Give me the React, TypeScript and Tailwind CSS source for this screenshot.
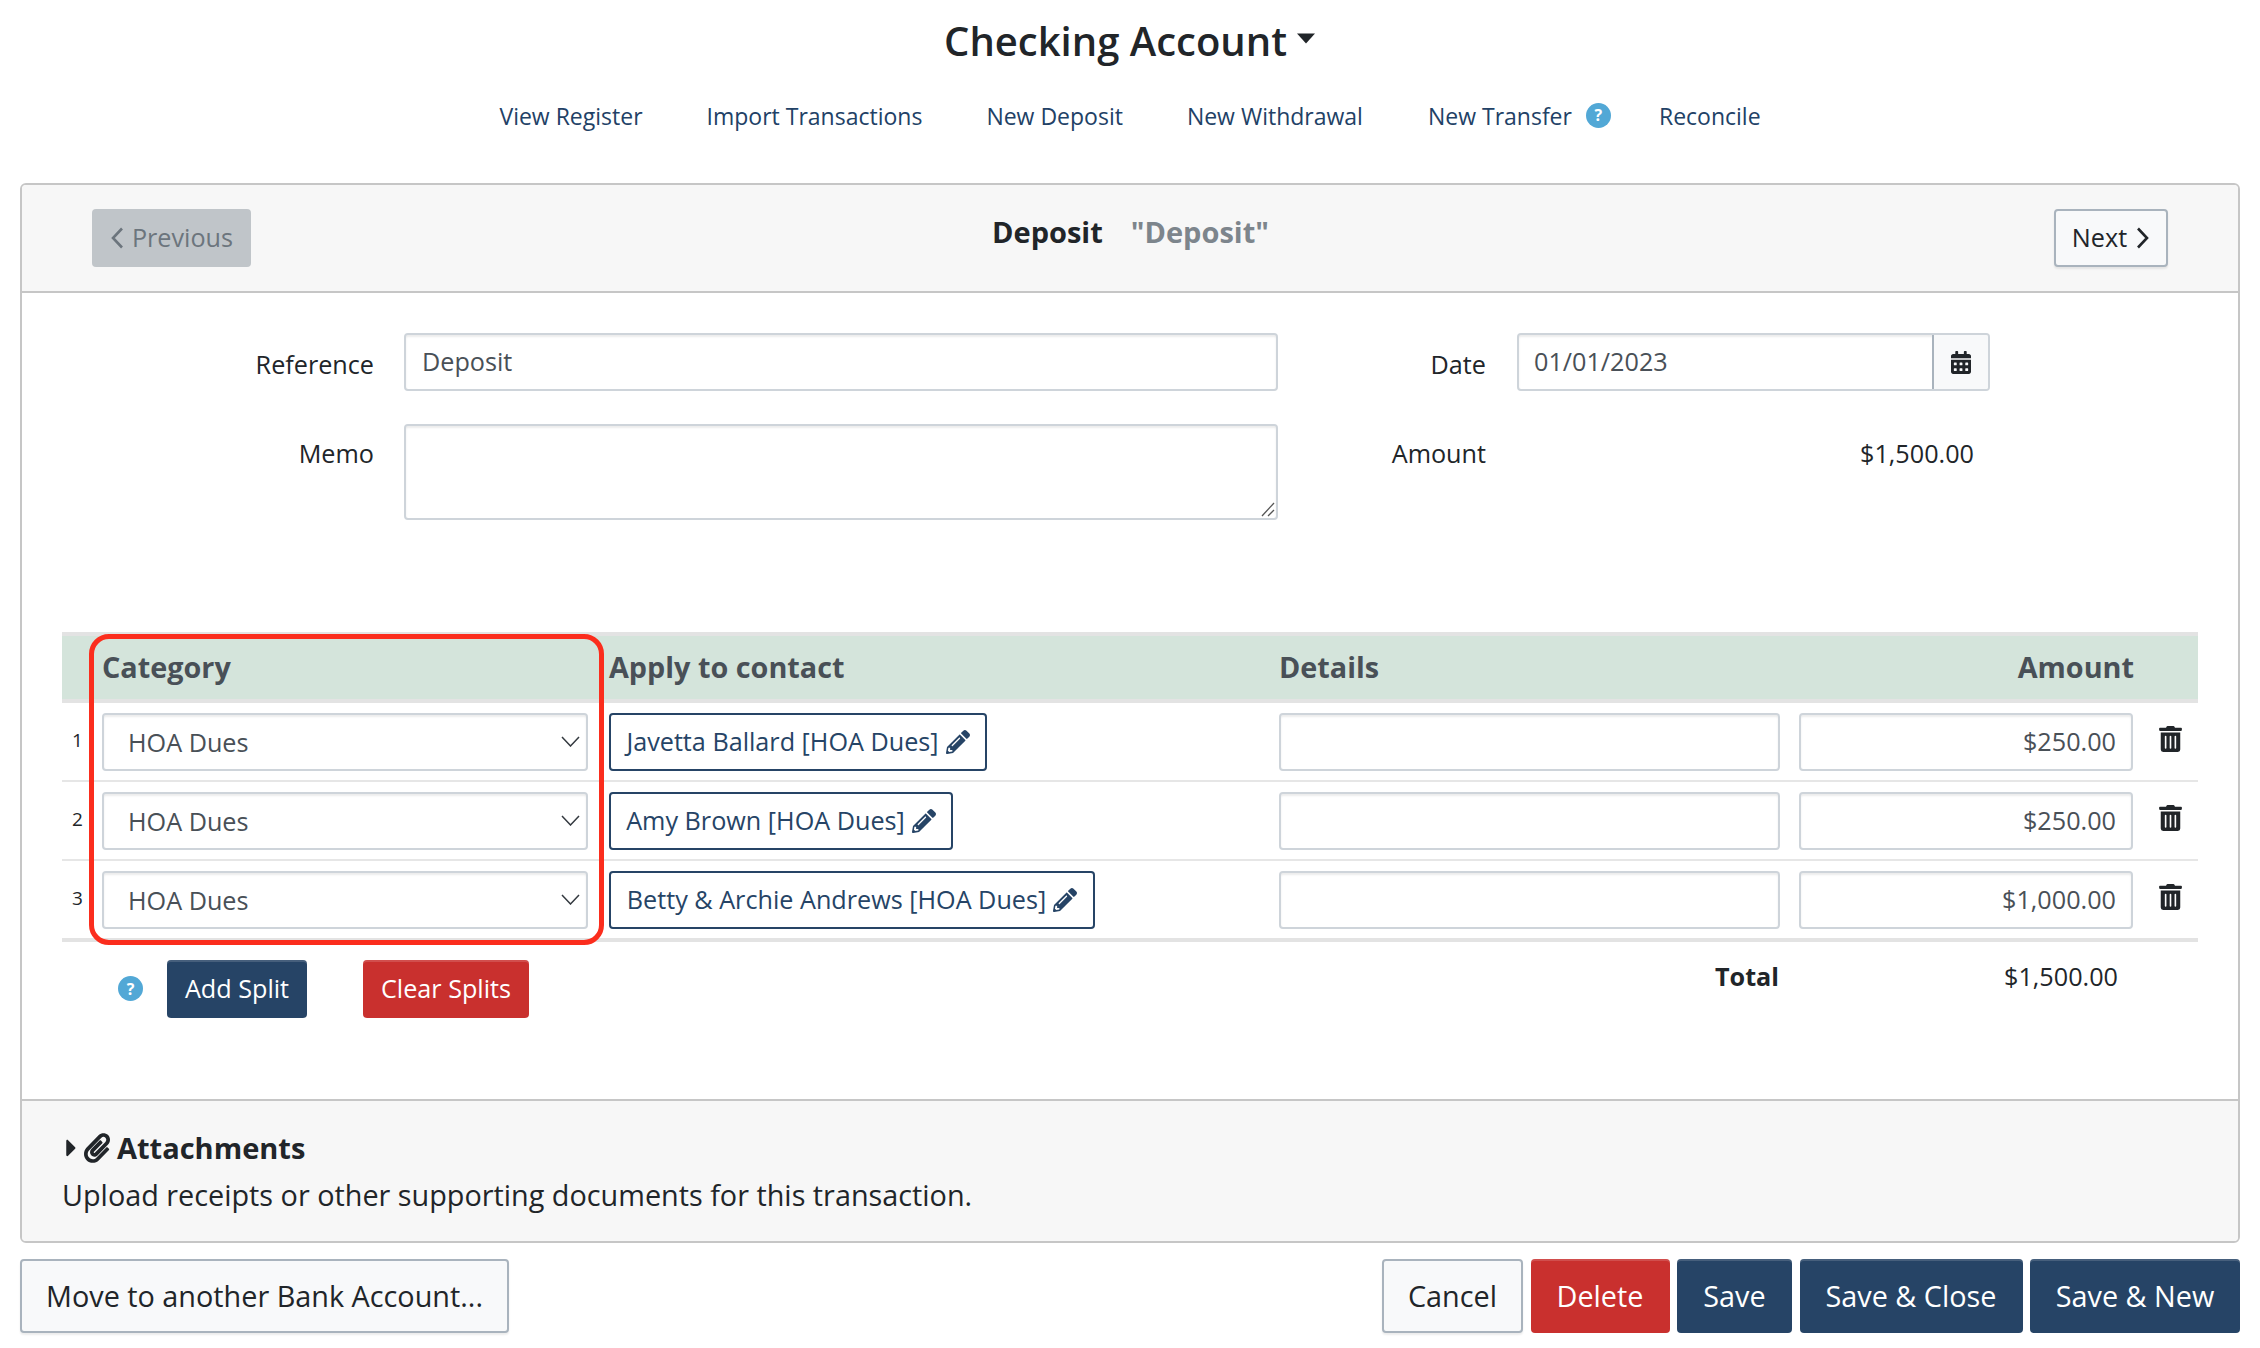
import React from "react";
import { FaPencilAlt, FaTrashAlt, FaCalendarAlt, FaPaperclip, FaCaretRight } from "react-icons/fa";

const inputCls =
  "h-[58px] border-2 border-[#ced4da] rounded-[4px] bg-white shadow-[inset_0_2px_2px_rgba(0,0,0,0.075)] text-[25.2px] text-[#495057]";
const navy = "bg-[#264466] text-white shadow-[inset_0_2px_0_rgba(255,255,255,0.15)]";
const red = "bg-[#c9302e] text-white shadow-[inset_0_2px_0_rgba(255,255,255,0.15)]";
const light = "bg-[#f8f9fa] border-2 border-[#a9b3bd] text-[#212529] shadow-[0_2px_2px_rgba(0,0,0,0.075)]";

const rows = [
  { n: 1, contact: "Javetta Ballard [HOA Dues]", w: "w-[378px]", amt: "$250.00" },
  { n: 2, contact: "Amy Brown [HOA Dues]", w: "w-[344px]", amt: "$250.00" },
  { n: 3, contact: "Betty & Archie Andrews [HOA Dues]", w: "w-[486px]", amt: "$1,000.00" },
];

function Help({ className }: { className: string }) {
  return (
    <span className={"inline-flex items-center justify-center w-[25px] h-[25px] rounded-full bg-[#52a8d6] text-white text-[16px] font-bold leading-none " + className}>
      ?
    </span>
  );
}

function Chevron({ dir }: { dir: "left" | "right" }) {
  return (
    <svg className="w-[14px] h-[22px] shrink-0" viewBox="0 0 14 22" fill="none" stroke="currentColor" strokeWidth="2.6">
      <path d={dir === "left" ? "M12 1.5 L3 11 L12 20.5" : "M2 1.5 L11 11 L2 20.5"} />
    </svg>
  );
}

export default function App() {
  return (
    <div className="w-[2260px] h-[1348px] bg-white font-['Open_Sans','Noto_Sans',sans-serif] text-[#212529] overflow-hidden">
      {/* Title */}
      <div className="h-[84px] flex items-center justify-center pb-[3px]">
        <span className="text-[40px] font-semibold leading-none text-[#212529]">Checking Account</span>
        <svg className="w-[20px] h-[11px] ml-[9px] -mt-[5px]" viewBox="0 0 20 11">
          <path d="M1 0.5 H19 L10 10.5 Z" fill="#212529" />
        </svg>
      </div>
      {/* Links */}
      <nav className="h-[99px] pt-[15px] flex justify-center items-start text-[23px] text-[#224166] leading-[34px]">
        <a className="mr-[64px]">View Register</a>
        <a className="mr-[64px]">Import Transactions</a>
        <a className="mr-[64px]">New Deposit</a>
        <a className="mr-[65px]">New Withdrawal</a>
        <a className="flex items-center">New Transfer<Help className="ml-[14px] -mt-[2px]" /></a>
        <a className="ml-[48px]">Reconcile</a>
      </nav>
      {/* Card */}
      <div className="relative mx-[20px] w-[2220px] h-[1060px] border-2 border-[#c6c6c6] rounded-[6px] overflow-hidden flex flex-col">
        <div className="h-[108px] shrink-0 bg-[#f7f7f7] border-b-2 border-[#c6c6c6] flex items-center justify-between pl-[70px] pr-[70px]">
          <button className="w-[159px] h-[58px] rounded-[4px] bg-[#c0c5c9] text-[#6c757d] text-[25.2px] flex items-center justify-center gap-[8px]">
            <Chevron dir="left" />Previous
          </button>
          <div className="flex text-[29px] font-bold -mt-[12px] relative -left-[22px]">
            <span className="text-[#212529]">Deposit</span>
            <span className="ml-[28px] text-[#7d858c]">"Deposit"</span>
          </div>
          <button className={"w-[114px] h-[58px] rounded-[4px] text-[25.2px] flex items-center justify-center gap-[9px] " + light}>
            Next<Chevron dir="right" />
          </button>
        </div>

        <div className="flex-1 relative px-[40px] pt-[40px]">
          {/* Form */}
          <div className="flex h-[299px]">
            <div className="w-[312px] shrink-0 text-right text-[25.2px] text-[#212529] leading-[34px]">
              <div className="h-[91px] pt-[14px]">Reference</div>
              <div className="pt-[12px]">Memo</div>
            </div>
            <div className="w-[874px] ml-[30px] shrink-0">
              <div className={"w-full flex items-center px-[16px] " + inputCls}>Deposit</div>
              <div className="mt-[33px] relative w-full h-[96px] border-2 border-[#ced4da] rounded-[4px] bg-white shadow-[inset_0_2px_2px_rgba(0,0,0,0.075)]">
                <svg className="absolute right-[1px] bottom-[1px] w-[16px] h-[16px]" viewBox="0 0 16 16">
                  <path d="M3 15 L15 2 M9 15 L15 9" stroke="#555" strokeWidth="1.3" fill="none" />
                </svg>
              </div>
            </div>
            <div className="w-[208px] shrink-0 text-right text-[25.2px] leading-[34px]">
              <div className="h-[91px] pt-[14px]">Date</div>
              <div className="pt-[12px]">Amount</div>
            </div>
            <div className="w-[473px] ml-[31px] shrink-0">
              <div className={"flex items-stretch overflow-hidden " + inputCls}>
                <div className="flex-1 flex items-center px-[15px]">01/01/2023</div>
                <div className="w-[56px] bg-[#f8f9fa] border-l-2 border-[#a9b3bd] flex items-center justify-center">
                  <FaCalendarAlt className="w-[20px] h-[23px] text-[#212529]" />
                </div>
              </div>
              <div className="mt-[45px] text-right pr-[16px] text-[25.2px] leading-[34px] text-[#212529]">$1,500.00</div>
            </div>
          </div>

          {/* Splits */}
          <div className="w-[2136px]">
            <div className="h-[71px] bg-[#d4e4db] border-y-[4px] border-[#e3e3e3] flex items-center text-[28.8px] font-bold text-[#495057]">
              <div className="w-[40px]" />
              <div className="w-[507px] -mt-[2px]">Category</div>
              <div className="w-[670px] -mt-[2px]">Apply to contact</div>
              <div className="w-[519px] -mt-[2px]">Details</div>
              <div className="w-[336px] text-right -mt-[2px]">Amount</div>
            </div>
            {rows.map((r, i) => (
              <div key={r.n} className={"flex pt-[10px] " + (i === 2 ? "h-[81px] border-b-[4px] border-[#e3e3e3]" : "h-[79px] border-b-2 border-[#e6e6e6]")}>
                <div className="w-[40px] pl-[10px] pt-[8px] text-[19px] text-[#212529] leading-[38px]">{r.n}</div>
                <div className={"w-[486px] flex items-center justify-between pl-[24px] pr-[6px] " + inputCls}>
                  <span className="pt-[2px]">HOA Dues</span>
                  <svg className="w-[19px] h-[11px] -mt-[2px]" viewBox="0 0 19 11" fill="none" stroke="#343a40" strokeWidth="1.5">
                    <path d="M1 1 L9.5 10 L18 1" />
                  </svg>
                </div>
                <div className="w-[21px]" />
                <div className="w-[670px]">
                  <div className={"h-[58px] border-2 border-[#264466] rounded-[4px] flex items-center justify-center text-[25.2px] text-[#264466] bg-white " + r.w}>
                    {r.contact}<FaPencilAlt className="w-[24px] h-[24px] ml-[7px] -mt-[1px]" />
                  </div>
                </div>
                <div className={"w-[501px] " + inputCls} />
                <div className="w-[19px]" />
                <div className={"w-[334px] flex items-center justify-end pr-[15px] " + inputCls}>{r.amt}</div>
                <div className="flex-1 pl-[26px]">
                  <FaTrashAlt className="w-[23px] h-[26px] mt-[13px] text-[#212529]" />
                </div>
              </div>
            ))}
            {/* Below */}
            <div className="flex items-start pt-[18px]">
              <Help className="ml-[56px] mt-[16px]" />
              <button className={"ml-[24px] w-[140px] h-[58px] rounded-[4px] text-[25.2px] " + navy}>Add Split</button>
              <button className={"ml-[56px] w-[166px] h-[58px] rounded-[4px] text-[25.2px] " + red}>Clear Splits</button>
              <div className="w-[1250px] text-right font-bold text-[25.2px] leading-[34px] -mt-[1px]">Total</div>
              <div className="w-[339px] text-right text-[25.2px] leading-[34px] -mt-[1px]">$1,500.00</div>
            </div>
          </div>

          {/* Highlight annotation */}
          <div className="absolute left-[67px] top-[341px] w-[515px] h-[311px] border-[5px] border-[#fb2d1d] rounded-[20px] pointer-events-none" />
        </div>

        <div className="h-[142px] shrink-0 bg-[#f7f7f7] border-t-2 border-[#c6c6c6] px-[40px] pt-[27px]">
          <div className="flex items-center h-[40px]">
            <FaCaretRight className="w-[11px] h-[28px] text-[#212529] ml-[4px]" />
            <FaPaperclip className="w-[26px] h-[30px] text-[#212529] ml-[7px]" />
            <span className="ml-[7px] text-[29px] font-bold text-[#212529]">Attachments</span>
          </div>
          <div className="text-[28.8px] leading-[38px] mt-[8px] text-[#212529]">Upload receipts or other supporting documents for this transaction.</div>
        </div>
      </div>

      {/* Footer */}
      <div className="mx-[20px] w-[2220px] mt-[16px] flex justify-between">
        <button className={"w-[489px] h-[74px] rounded-[4px] text-[28.8px] " + light}>Move to another Bank Account...</button>
        <div className="flex gap-[7.5px] text-[28.8px]">
          <button className={"w-[141px] h-[74px] rounded-[4px] " + light}>Cancel</button>
          <button className={"w-[139px] h-[74px] rounded-[4px] " + red}>Delete</button>
          <button className={"w-[115px] h-[74px] rounded-[4px] " + navy}>Save</button>
          <button className={"w-[223px] h-[74px] rounded-[4px] " + navy}>Save &amp; Close</button>
          <button className={"w-[210px] h-[74px] rounded-[4px] " + navy}>Save &amp; New</button>
        </div>
      </div>
    </div>
  );
}
